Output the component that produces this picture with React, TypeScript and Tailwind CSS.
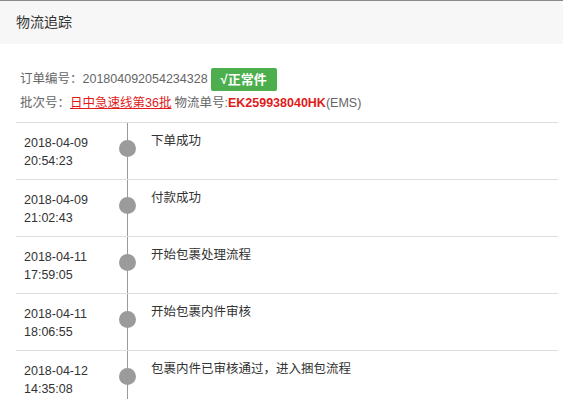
import React from 'react';

interface TrackEvent {
  date: string;
  time: string;
  text: string;
}

const EVENTS: TrackEvent[] = [
  { date: '2018-04-09', time: '20:54:23', text: '下单成功' },
  { date: '2018-04-09', time: '21:02:43', text: '付款成功' },
  { date: '2018-04-11', time: '17:59:05', text: '开始包裹处理流程' },
  { date: '2018-04-11', time: '18:06:55', text: '开始包裹内件审核' },
  { date: '2018-04-12', time: '14:35:08', text: '包裹内件已审核通过，进入捆包流程' },
];

const FONT = { fontFamily: '"Liberation Sans", Arial, "Noto Sans CJK SC", sans-serif' };

export default function App() {
  return (
    <div className="w-[563px] h-[399px] overflow-hidden bg-white text-[12.5px]" style={FONT}>
      {/* Header */}
      <div className="h-[44px] border-t border-[#8a8a8a] bg-[#f7f7f7] flex items-center pl-[16px]">
        <h1 className="text-[14px] text-[#333] font-normal">物流追踪</h1>
      </div>

      {/* Order info */}
      <div className="pl-[20px] pt-[24px]">
        <div className="flex items-center gap-[3px] text-[#666] h-[23px]">
          <span>订单编号：201804092054234328</span>
          <span className="h-[23px] w-[66px] rounded-[2px] bg-[#4cae4c] text-white font-bold text-[13px] flex items-center justify-center">
            √正常件
          </span>
        </div>
        <div className="mt-[1px] h-[22px] flex items-center text-[#666] whitespace-nowrap">
          <span>批次号：</span>
          <span className="text-[#e01b1b] underline">日中急速线第36批</span>
          <span className="ml-[3px]">物流单号:</span>
          <span className="text-[#e01b1b] font-bold">EK259938040HK</span>
          <span>(EMS)</span>
        </div>
      </div>

      {/* Timeline */}
      <div className="ml-[16px] mr-[5px] mt-[8px]">
        {EVENTS.map((e, i) => (
          <div key={i} className="flex h-[57px] border-t border-[#dedede]">
            <div className="w-[103px] pl-[8px] pt-[11px] leading-[18px] text-[#333]">
              <div>{e.date}</div>
              <div>{e.time}</div>
            </div>
            <div className="relative w-[17px] flex justify-center">
              <div className="absolute top-0 bottom-0 left-[8px] w-px bg-[#9a9a9a]" />
              <div className="relative mt-[17px] w-[17px] h-[17px] rounded-full bg-[#9b9b9b]" />
            </div>
            <div className="pl-[15px] pt-[9px] leading-[18px] text-[#333]">{e.text}</div>
          </div>
        ))}
      </div>
    </div>
  );
}
